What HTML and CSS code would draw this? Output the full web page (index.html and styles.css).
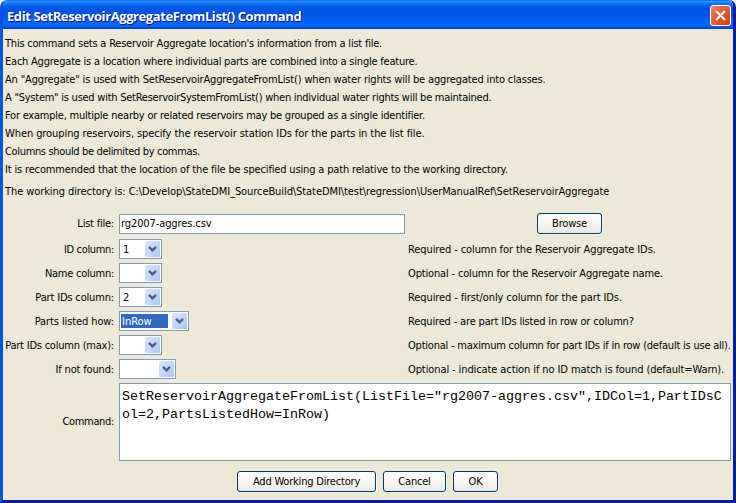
FILE: index.html
```html
<!DOCTYPE html>
<html lang="en">
<head>
<meta charset="utf-8">
<title>Edit SetReservoirAggregateFromList() Command</title>
<link rel="stylesheet" href="styles.css">
</head>
<body>
<svg class="defs" width="0" height="0"><defs>
<linearGradient id="arrowBg" x1="0" y1="0" x2="1" y2="1"><stop offset="0" stop-color="#dce7ff"/><stop offset="1" stop-color="#adc4f7"/></linearGradient>
<symbol id="arrow" viewBox="0 0 15 16"><rect x="0" y="0" width="15" height="16" rx="1.5" fill="url(#arrowBg)"/><path d="M4 5.8 L7.5 9.3 L11 5.8" fill="none" stroke="#4d6185" stroke-width="2.4"/></symbol>
</defs></svg>
<div class="window">
  <header class="titlebar">
    <h1>Edit SetReservoirAggregateFromList() Command</h1>
    <button class="close" aria-label="Close"><svg width="19" height="19" viewBox="0 0 19 19"><path d="M5 5 L14 14 M14 5 L5 14" stroke="#fff" stroke-width="2.2" fill="none"/></svg></button>
  </header>
  <main class="content">
    <div class="intro">
      <p class="tight">This command sets a Reservoir Aggregate location's information from a list file.</p>
      <p class="tight">Each Aggregate is a location where individual parts are combined into a single feature.</p>
      <p class="snug">An "Aggregate" is used with SetReservoirAggregateFromList() when water rights will be aggregated into classes.</p>
      <p class="tighter">A "System" is used with SetReservoirSystemFromList() when individual water rights will be maintained.</p>
      <p class="tight">For example, multiple nearby or related reservoirs may be grouped as a single identifier.</p>
      <p class="loose">When grouping reservoirs, specify the reservoir station IDs for the parts in the list file.</p>
      <p class="tightest">Columns should be delimited by commas.</p>
      <p class="snug">It is recommended that the location of the file be specified using a path relative to the working directory.</p>
      <p class="cwd loose">The working directory is: C:\Develop\StateDMI_SourceBuild\StateDMI\test\regression\UserManualRef\SetReservoirAggregate</p>
    </div>
    <div class="form">
      <div class="row file"><label class="tight">List file:</label><div class="field"><div class="input">rg2007-aggres.csv</div></div><div class="browse"><button class="btn">Browse</button></div></div>
      <div class="row"><label class="tightest">ID column:</label><div class="field"><div class="combo"><span>1</span><svg width="15" height="16"><use href="#arrow"/></svg></div></div><p>Required - column for the Reservoir Aggregate IDs.</p></div>
      <div class="row"><label class="tighter">Name column:</label><div class="field"><div class="combo"><span></span><svg width="15" height="16"><use href="#arrow"/></svg></div></div><p class="snug">Optional - column for the Reservoir Aggregate name.</p></div>
      <div class="row"><label class="snug">Part IDs column:</label><div class="field"><div class="combo"><span>2</span><svg width="15" height="16"><use href="#arrow"/></svg></div></div><p>Required - first/only column for the part IDs.</p></div>
      <div class="row"><label>Parts listed how:</label><div class="field"><div class="combo wide"><span class="selected">InRow</span><svg width="15" height="16"><use href="#arrow"/></svg></div></div><p class="snug">Required - are part IDs listed in row or column?</p></div>
      <div class="row"><label class="tight">Part IDs column (max):</label><div class="field"><div class="combo"><span></span><svg width="15" height="16"><use href="#arrow"/></svg></div></div><p class="tight">Optional - maximum column for part IDs if in row (default is use all).</p></div>
      <div class="row"><label class="snug">If not found:</label><div class="field"><div class="combo medium"><span></span><svg width="15" height="16"><use href="#arrow"/></svg></div></div><p>Optional - indicate action if no ID match is found (default=Warn).</p></div>
      <div class="row command"><label class="tightest">Command:</label><div class="textarea">SetReservoirAggregateFromList(ListFile="rg2007-aggres.csv",IDCol=1,PartIDsCol=2,PartsListedHow=InRow)</div></div>
    </div>
    <footer class="actions"><button class="btn add">Add Working Directory</button><button class="btn cancel">Cancel</button><button class="btn ok">OK</button></footer>
  </main>
</div>
</body>
</html>
```
FILE: styles.css
```css
* { box-sizing: border-box; }
body { margin: 0; background: #fff; color: #000; font: 11px/18px "DejaVu Sans Condensed", "DejaVu Sans", sans-serif; font-stretch: condensed; letter-spacing: -0.1px; overflow: hidden; }
p { margin: 0; white-space: nowrap; }
.loose { letter-spacing: -0.08px; }
.snug { letter-spacing: -0.16px; }
.tight { letter-spacing: -0.22px; }
.tighter { letter-spacing: -0.25px; }
.tightest { letter-spacing: -0.34px; }
.defs { display: block; position: absolute; }
.window { width: 736px; height: 503px; background: #ece9d8; border: solid; border-width: 0 3px 3px; border-color: #0831d9 #001ea0 #001ea0 #0855dd; border-radius: 7px 7px 0 0; overflow: hidden; }
.titlebar { height: 29px; margin: 0 -3px; padding: 0 5px 0 7px; display: flex; align-items: center; justify-content: space-between; background: linear-gradient(#0058ee 0, #3593ff 1px, #288eff 2px, #127dff 3px, #036ffc 4px, #0262ee 6px, #0057e5 8px, #0054e3 10px, #0055eb 15px, #0066ff 23px, #0067fc 26px, #0144d0 28px, #003dd7 29px); }
h1 { margin: 0; padding-top: 2px; font: bold 13px/20px "Open Sans", sans-serif; font-stretch: normal; color: #fff; text-shadow: 1px 1px #0f1089; white-space: nowrap; letter-spacing: -0.41px; }
.close { width: 21px; height: 21px; padding: 0; margin-top: 2px; border: 1px solid #fff; border-radius: 3px; background: radial-gradient(circle at 85% 85%, #e04008, #e25a36 55%, #e98b70); }
.close svg { display: block; }
.content { padding: 6px 2px 0 2px; }
.cwd { margin-top: 4px; }
.form { padding-top: 12px; }
.row { display: grid; grid-template-columns: 110px 284px 1fr; column-gap: 5px; height: 20px; margin-bottom: 4px; align-items: center; }
.row label { text-align: right; white-space: nowrap; margin: 0 1px 0 -4px; }
.row:not(.file):not(.command) > label, .row:not(.file) > p { padding-top: 2px; }
.row .field { margin-left: -1px; }
.row > p { margin-left: -1px; }
.file { margin-bottom: 6px; }
.input { width: 286px; height: 20px; border: 1px solid #7f9db9; background: #fff; padding: 0 1px; line-height: 18px; }
.browse { padding-left: 128px; height: 21px; }
.btn { height: 21px; padding: 0; border: 1px solid #003c74; border-radius: 3px; background: linear-gradient(#fff, #f4f3ee 65%, #ece9e0); color: #000; font: inherit; letter-spacing: -0.2px; line-height: 19px; box-shadow: 1px 1px #f8f6ee; }
.browse .btn { width: 65px; display: block; }
.combo { display: flex; width: 43px; height: 20px; padding: 1px; border: 1px solid #7f9db9; background: #fff; justify-content: space-between; }
.combo span { width: 22px; padding-left: 2px; line-height: 18px; }
.combo svg { display: block; }
.combo.wide { width: 70px; }
.combo.medium { width: 57px; }
.combo .selected { width: 47px; height: 14px; margin-top: 1px; padding-left: 1px; line-height: 15px; background: #316ac5; color: #fff; letter-spacing: 0; }
.command { grid-template-columns: 110px 612px; height: 78px; margin-bottom: 0; }
.textarea { width: 612px; height: 78px; margin-left: -1px; padding: 4px 2px; border: 1px solid #7f9db9; background: #fff; font: 13.333px/18px "Liberation Mono", monospace; letter-spacing: 0; word-break: break-all; }
.actions { display: flex; gap: 7px; padding: 10px 0 0 232px; }
.add { width: 139px; }
.cancel { width: 63px; }
.ok { width: 45px; }
```
